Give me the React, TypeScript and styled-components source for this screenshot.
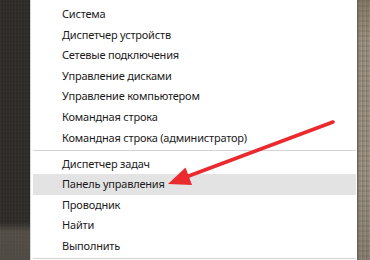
import React from 'react'
import styled, { createGlobalStyle } from 'styled-components'

const GlobalStyle = createGlobalStyle`
  html, body {
    margin: 0;
    padding: 0;
    background: #2c2926;
  }
  #root {
    width: 370px;
    height: 260px;
    overflow: hidden;
  }
`

type Entry = { label: string; active?: boolean }

const topGroup: Entry[] = [
  { label: 'Система' },
  { label: 'Диспетчер устройств' },
  { label: 'Сетевые подключения' },
  { label: 'Управление дисками' },
  { label: 'Управление компьютером' },
  { label: 'Командная строка' },
  { label: 'Командная строка (администратор)' },
]

const bottomGroup: Entry[] = [
  { label: 'Диспетчер задач' },
  { label: 'Панель управления', active: true },
  { label: 'Проводник' },
  { label: 'Найти' },
  { label: 'Выполнить' },
]

const App = () => {
  return (
    <>
      <GlobalStyle />
      <Desktop>
        <DarkStone />
        <Menu>
          <Group>
            {topGroup.map((e) => (
              <Item key={e.label} $active={e.active}>
                {e.label}
              </Item>
            ))}
          </Group>
          <Divider />
          <Group>
            {bottomGroup.map((e) => (
              <Item key={e.label} $active={e.active}>
                {e.label}
              </Item>
            ))}
          </Group>
          <Divider />
        </Menu>
        <LightStone />
        <Pointer />
      </Desktop>
    </>
  )
}

export default App

// red arrow drawn over the menu
const Pointer = () => (
  <ArrowLayer width="370" height="260" viewBox="0 0 370 260">
    <line
      x1="333"
      y1="122"
      x2="186"
      y2="177"
      stroke="#ea2a2e"
      strokeWidth="3.6"
      strokeLinecap="round"
    />
    <polygon points="168,184 185.5,167.6 192,185" fill="#ea2a2e" />
  </ArrowLayer>
)

const Desktop = styled.div`
  position: relative;
  width: 370px;
  height: 260px;
  display: grid;
  grid-template-columns: 30px 1fr 13px;
  font-family: 'Noto Sans', 'Segoe UI', sans-serif;
`

const DarkStone = styled.div`
  background:
    linear-gradient(180deg, transparent 0, transparent 222px, rgba(150, 140, 125, 0.35) 232px, rgba(120, 112, 100, 0.45) 260px),
    repeating-linear-gradient(90deg, rgba(255, 255, 255, 0.03) 0 1px, transparent 1px 3px),
    repeating-linear-gradient(0deg, rgba(0, 0, 0, 0.08) 0 1px, transparent 1px 4px),
    #2e2b28;
`

const LightStone = styled.div`
  border-left: 1px solid #6a6358;
  background:
    linear-gradient(180deg, rgba(100, 85, 62, 0.4) 0, transparent 40px, transparent 180px, rgba(80, 75, 65, 0.25) 260px),
    repeating-linear-gradient(90deg, rgba(0, 0, 0, 0.1) 0 1px, transparent 1px 3px, rgba(255, 255, 255, 0.1) 3px 4px),
    repeating-linear-gradient(0deg, rgba(0, 0, 0, 0.08) 0 2px, transparent 2px 5px),
    #968c7c;
`

const Menu = styled.div`
  background: #fff;
  border-left: 1px solid #d9d9d9;
  padding: 4px 1px 0 2px;
  display: flex;
  flex-direction: column;
`

const Group = styled.div`
  display: flex;
  flex-direction: column;
`

const Item = styled.div<{ $active?: boolean }>`
  height: 20.6px;
  line-height: 20.6px;
  padding-left: 29px;
  font-size: 11px;
  letter-spacing: -0.2px;
  color: #1b1b1b;
  white-space: nowrap;
  background: ${(p) => (p.$active ? '#e3e3e3' : 'transparent')};
`

const Divider = styled.div`
  height: 1px;
  margin: 1.5px 0 3px;
  background: #d4d4d4;
`

const ArrowLayer = styled.svg`
  position: absolute;
  left: 0;
  top: 0;
  pointer-events: none;
`
